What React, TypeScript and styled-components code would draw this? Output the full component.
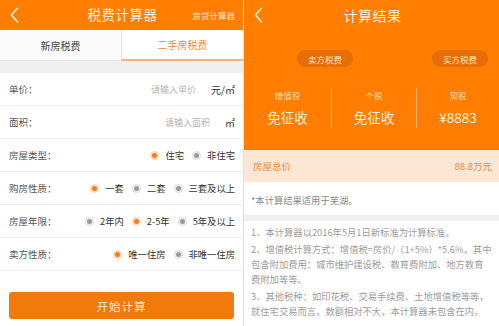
import React from "react";
import styled, { createGlobalStyle } from "styled-components";

const Global = createGlobalStyle`
  html, body { margin: 0; padding: 0; background: #fff; }
  body { font-family: "Noto Sans CJK SC", "Noto Sans", sans-serif; }
  * { box-sizing: border-box; }
`;

const ORANGE = "#ff7d00";

const Screen = styled.div`
  display: flex;
  width: 499px;
  height: 326px;
  overflow: hidden;
  background: #fff;
`;

const LeftPanel = styled.div`
  width: 244px;
  flex: none;
  display: flex;
  flex-direction: column;
  border-right: 1px solid #e2e2e2;
  background: #fff;
`;

const RightPanel = styled.div`
  flex: 1;
  display: flex;
  flex-direction: column;
  background: #fff;
`;

const TopBar = styled.div`
  height: 30px;
  flex: none;
  display: grid;
  grid-template-columns: 1fr auto 1fr;
  align-items: center;
  padding: 0 8px 0 10px;
  background: ${ORANGE};
  color: #fff1dd;
`;

const Title = styled.div<{ $size: number }>`
  font-size: ${(p) => p.$size}px;
  letter-spacing: 0.5px;
  line-height: 1;
`;

const SideLink = styled.div`
  justify-self: end;
  font-size: 8.5px;
  color: #ffe3c4;
`;

const BackIcon = () => (
  <svg width="9" height="16" viewBox="0 0 9 16" style={{ display: "block" }}>
    <polyline points="7.5,1 1.5,8 7.5,15" fill="none" stroke="#fff1dd" strokeWidth="1.6" strokeLinecap="round" strokeLinejoin="round" />
  </svg>
);

const Tabs = styled.div`
  height: 31px;
  flex: none;
  display: flex;
`;

const Tab = styled.div<{ $active?: boolean }>`
  flex: 1;
  display: flex;
  align-items: center;
  justify-content: center;
  font-size: 10px;
  color: ${(p) => (p.$active ? "#f08a3c" : "#444")};
  background: ${(p) => (p.$active ? "#fff" : "#fbfbfb")};
  border-left: ${(p) => (p.$active ? "1px solid #e6e6e6" : "none")};
  border-bottom: ${(p) => (p.$active ? "2px solid #f5b07a" : "1px solid #e6e6e6")};
`;

const Band = styled.div<{ $h: number }>`
  height: ${(p) => p.$h}px;
  flex: none;
  background: #f0f0f0;
`;

const Row = styled.div`
  height: 33px;
  flex: none;
  display: flex;
  align-items: center;
  justify-content: space-between;
  padding: 0 8px 0 9px;
  border-bottom: 1px solid #eeeeee;
`;

const Label = styled.div`
  font-size: 9.5px;
  color: #555;
`;

const InputSide = styled.div`
  display: flex;
  align-items: center;
  gap: 15px;
`;

const Placeholder = styled.span`
  font-size: 9px;
  color: #b4b4b4;
`;

const Unit = styled.span`
  font-size: 10px;
  color: #333;
`;

const Options = styled.div`
  display: flex;
  align-items: center;
  gap: 8px;
`;

const Option = styled.div`
  display: flex;
  align-items: center;
  gap: 6px;
  font-size: 9.3px;
  color: #333;
`;

const Dot = styled.span<{ $on?: boolean }>`
  width: 9px;
  height: 9px;
  border-radius: 50%;
  flex: none;
  background: ${(p) => (p.$on ? "#ffe2c8" : "#f2f2f2")};
  border: 1px solid ${(p) => (p.$on ? "#fbd3b0" : "#dcdcdc")};
  display: flex;
  align-items: center;
  justify-content: center;
  &::after {
    content: "";
    width: 5px;
    height: 5px;
    border-radius: 50%;
    background: ${(p) => (p.$on ? "#f07f1c" : "#9a9a9a")};
  }
`;

const ButtonArea = styled.div`
  padding: 21px 9px 0 9px;
`;

const StartButton = styled.div`
  height: 27px;
  border-radius: 3px;
  background: #f27a0a;
  color: #ffe9d2;
  font-size: 11.5px;
  letter-spacing: 1px;
  display: flex;
  align-items: center;
  justify-content: center;
`;

const ResultHeader = styled.div`
  height: 150px;
  flex: none;
  background: ${ORANGE};
  display: flex;
  flex-direction: column;
`;

const PillRow = styled.div`
  display: flex;
  justify-content: space-between;
  padding: 0 11px 0 53px;
  margin-top: 20px;
`;

const Pill = styled.div`
  width: 56px;
  height: 17px;
  border-radius: 9px;
  background: #e56e07;
  color: #ffe2c2;
  font-size: 8.5px;
  display: flex;
  align-items: center;
  justify-content: center;
`;

const Stats = styled.div`
  display: grid;
  grid-template-columns: 87px 85px 1fr;
  margin-top: 21px;
`;

const Stat = styled.div<{ $divider?: boolean }>`
  height: 40px;
  display: flex;
  flex-direction: column;
  align-items: center;
  justify-content: space-between;
  border-left: ${(p) => (p.$divider ? "1px solid rgba(255, 226, 190, 0.55)" : "none")};
`;

const StatLabel = styled.div`
  font-size: 8.5px;
  line-height: 12px;
  margin-top: 1px;
  color: #ffd9ae;
`;

const StatValue = styled.div`
  font-size: 13.5px;
  line-height: 16px;
  margin-bottom: 3px;
  color: #fff0d8;
`;

const TotalRow = styled.div`
  height: 32px;
  flex: none;
  display: flex;
  align-items: center;
  justify-content: space-between;
  padding: 0 7px 0 9px;
  background: #fde6d3;
  color: #e88a3e;
  font-size: 9.5px;
`;

const ScopeRow = styled.div`
  height: 33px;
  flex: none;
  display: flex;
  align-items: center;
  padding: 3px 0 0 7px;
  font-size: 9.3px;
  color: #8a8a8a;
`;

const Notes = styled.div`
  padding: 4px 6px 0 7px;
  display: flex;
  flex-direction: column;
  gap: 2px;
`;

const Note = styled.p`
  margin: 0;
  font-size: 9.3px;
  line-height: 15px;
  color: #9c9c9c;
  white-space: nowrap;
`;

const Radio = ({ items, sel }: { items: string[]; sel: number }) => (
  <Options>
    {items.map((t, i) => (
      <Option key={t}>
        <Dot $on={i === sel} />
        {t}
      </Option>
    ))}
  </Options>
);

export default function App() {
  return (
    <>
      <Global />
      <Screen>
        <LeftPanel>
          <TopBar>
            <BackIcon />
            <Title $size={13.5}>税费计算器</Title>
            <SideLink>房贷计算器</SideLink>
          </TopBar>
          <Tabs>
            <Tab>新房税费</Tab>
            <Tab $active>二手房税费</Tab>
          </Tabs>
          <Band $h={12} />
          <Row>
            <Label>单价：</Label>
            <InputSide>
              <Placeholder>请输入单价</Placeholder>
              <Unit>元/㎡</Unit>
            </InputSide>
          </Row>
          <Row>
            <Label>面积：</Label>
            <InputSide>
              <Placeholder>请输入面积</Placeholder>
              <Unit>㎡</Unit>
            </InputSide>
          </Row>
          <Row>
            <Label>房屋类型：</Label>
            <Radio items={["住宅", "非住宅"]} sel={0} />
          </Row>
          <Row>
            <Label>购房性质：</Label>
            <Radio items={["一套", "二套", "三套及以上"]} sel={0} />
          </Row>
          <Row>
            <Label>房屋年限：</Label>
            <Radio items={["2年内", "2-5年", "5年及以上"]} sel={1} />
          </Row>
          <Row>
            <Label>卖方性质：</Label>
            <Radio items={["唯一住房", "非唯一住房"]} sel={0} />
          </Row>
          <ButtonArea>
            <StartButton>开始计算</StartButton>
          </ButtonArea>
        </LeftPanel>
        <RightPanel>
          <ResultHeader>
            <TopBar>
              <BackIcon />
              <Title $size={14}>计算结果</Title>
              <span />
            </TopBar>
            <PillRow>
              <Pill>卖方税费</Pill>
              <Pill>买方税费</Pill>
            </PillRow>
            <Stats>
              <Stat>
                <StatLabel>增值税</StatLabel>
                <StatValue>免征收</StatValue>
              </Stat>
              <Stat $divider>
                <StatLabel>个税</StatLabel>
                <StatValue>免征收</StatValue>
              </Stat>
              <Stat $divider>
                <StatLabel>契税</StatLabel>
                <StatValue>¥8883</StatValue>
              </Stat>
            </Stats>
          </ResultHeader>
          <TotalRow>
            <span>房屋总价</span>
            <span>88.8万元</span>
          </TotalRow>
          <ScopeRow>*本计算结果适用于芜湖。</ScopeRow>
          <Band $h={6} />
          <Notes>
            <Note>1、本计算器以2016年5月1日新标准为计算标准。</Note>
            <Note>
              2、增值税计算方式：增值税=房价/（1+5%）*5.6%，其中
              <br />
              包含附加费用：城市维护建设税、教育费附加、地方教育
              <br />
              费附加等等。
            </Note>
            <Note>
              3、其他税种：如印花税、交易手续费、土地增值税等等，
              <br />
              就住宅交易而言，数额相对不大，本计算器未包含在内。
            </Note>
          </Notes>
        </RightPanel>
      </Screen>
    </>
  );
}
